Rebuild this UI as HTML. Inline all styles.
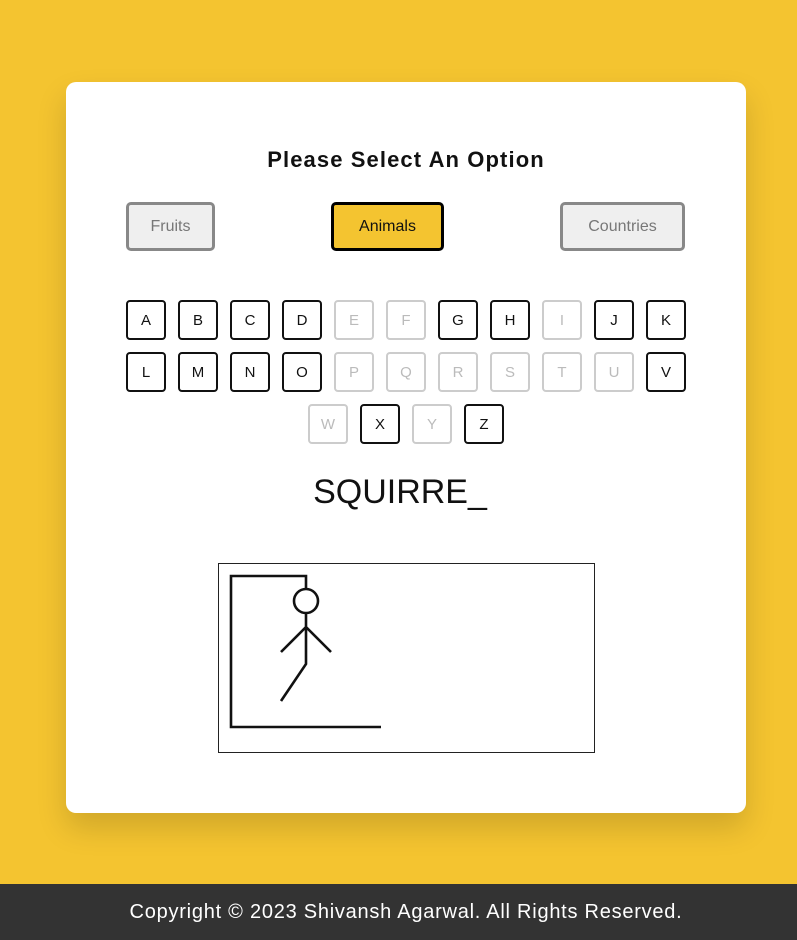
<!DOCTYPE html>
<html><head><style>
*{box-sizing:border-box;margin:0;padding:0}
body{width:797px;height:940px;background:#f4c430;font-family:"Liberation Sans",sans-serif;position:relative;overflow:hidden}
.card{position:absolute;left:66px;top:82px;width:680px;height:731px;background:#fff;border-radius:10px;box-shadow:0 15px 30px rgba(0,0,0,.15)}
h1{position:absolute;left:0;width:812px;top:147px;text-align:center;font-size:22px;font-weight:bold;color:#111;letter-spacing:1.1px}
.opt{position:absolute;top:202px;height:49px;border:3px solid #888;background:#efefef;border-radius:5px;color:#777;font-size:16px;display:flex;align-items:center;justify-content:center}
.opt.on{background:#f4c430;border-color:#000;color:#111}
.k{position:absolute;width:40px;height:40px;border:2px solid #111;border-radius:4px;font-size:15px;display:flex;align-items:center;justify-content:center;color:#111;background:#fff}
.k.d{border-color:#ccc;color:#bbb}
.word{position:absolute;left:0;width:800px;top:473px;text-align:center;font-size:34px;color:#111}
footer{position:absolute;left:0;top:884px;width:812px;height:56px;background:#333;color:#fff;font-size:20px;display:flex;align-items:center;justify-content:center;letter-spacing:0.75px}
</style></head><body>
<div class="card"></div>
<h1>Please Select An Option</h1>
<div class="opt" style="left:126px;width:89px">Fruits</div>
<div class="opt on" style="left:331px;width:113px">Animals</div>
<div class="opt" style="left:560px;width:125px">Countries</div>
<div class="k" style="left:126px;top:300px">A</div>
<div class="k" style="left:178px;top:300px">B</div>
<div class="k" style="left:230px;top:300px">C</div>
<div class="k" style="left:282px;top:300px">D</div>
<div class="k d" style="left:334px;top:300px">E</div>
<div class="k d" style="left:386px;top:300px">F</div>
<div class="k" style="left:438px;top:300px">G</div>
<div class="k" style="left:490px;top:300px">H</div>
<div class="k d" style="left:542px;top:300px">I</div>
<div class="k" style="left:594px;top:300px">J</div>
<div class="k" style="left:646px;top:300px">K</div>
<div class="k" style="left:126px;top:352px">L</div>
<div class="k" style="left:178px;top:352px">M</div>
<div class="k" style="left:230px;top:352px">N</div>
<div class="k" style="left:282px;top:352px">O</div>
<div class="k d" style="left:334px;top:352px">P</div>
<div class="k d" style="left:386px;top:352px">Q</div>
<div class="k d" style="left:438px;top:352px">R</div>
<div class="k d" style="left:490px;top:352px">S</div>
<div class="k d" style="left:542px;top:352px">T</div>
<div class="k d" style="left:594px;top:352px">U</div>
<div class="k" style="left:646px;top:352px">V</div>
<div class="k d" style="left:308px;top:404px">W</div>
<div class="k" style="left:360px;top:404px">X</div>
<div class="k d" style="left:412px;top:404px">Y</div>
<div class="k" style="left:464px;top:404px">Z</div>
<div class="word">SQUIRRE_</div>
<svg style="position:absolute;left:218px;top:563px" width="377" height="190">
<rect x="0.5" y="0.5" width="376" height="189" fill="#fff" stroke="#222"/>
<g stroke="#111" stroke-width="2.6" fill="none">
<path d="M163 164H13V13H88V26"/>
<circle cx="88" cy="38" r="12"/>
<path d="M88 50V101L63 138M88 64L63 89M88 64L113 89"/>
</g></svg>
<footer>Copyright © 2023 Shivansh Agarwal. All Rights Reserved.</footer>
</body></html>
